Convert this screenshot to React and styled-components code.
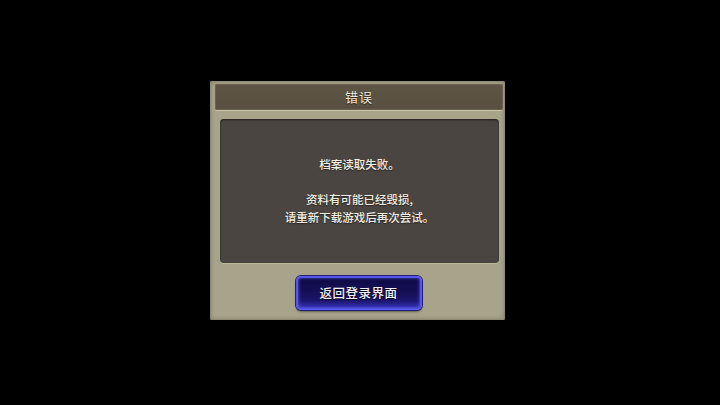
import React from "react";
import styled, { createGlobalStyle } from "styled-components";

const Global = createGlobalStyle`
  html, body { margin: 0; padding: 0; background: #000; }
  #root { width: 720px; height: 405px; }
`;

const Screen = styled.div`
  width: 720px;
  height: 405px;
  background: #000;
  display: flex;
  align-items: center;
  justify-content: center;
  font-family: "Noto Sans CJK SC", "Noto Sans", sans-serif;
`;

const Dialog = styled.div`
  width: 295px;
  height: 239px;
  box-sizing: border-box;
  margin-left: -5px;
  margin-top: -5px;
  padding: 3px 2px 10px 5px;
  background: #a8a38b;
  border-radius: 2px;
  box-shadow: inset 0 0 0 1px #8f8a72, inset 0 0 4px rgba(60, 55, 40, 0.5);
  display: flex;
  flex-direction: column;
`;

const TitleBar = styled.div`
  height: 26px;
  flex: none;
  background: linear-gradient(#5f5545, #594f40);
  border-radius: 2px;
  box-shadow: inset 0 0 0 1px #6c624f, 0 1px 0 #c7c2a8;
  display: flex;
  align-items: center;
  justify-content: center;
  color: #efeadc;
  font-size: 13px;
  letter-spacing: 1px;
  text-shadow: 0 1px 1px rgba(0, 0, 0, 0.6);
`;

const MessageBox = styled.div`
  margin: 9px 4px 0 5px;
  height: 144px;
  flex: none;
  box-sizing: border-box;
  background: #4a4540;
  border-radius: 4px;
  box-shadow: inset 0 1px 2px rgba(0, 0, 0, 0.6), 0 1px 0 #bdb8a0;
  display: flex;
  flex-direction: column;
  align-items: center;
  justify-content: center;
  gap: 17px;
  color: #f2eee4;
  font-size: 11.5px;
  font-weight: 500;
  line-height: 18px;
  text-shadow: 0 1px 1px rgba(0, 0, 0, 0.5);
  text-align: center;
`;

const Paragraph = styled.p`
  margin: 0;
`;

const Footer = styled.div`
  flex: 1;
  display: flex;
  align-items: flex-end;
  justify-content: center;
  padding-right: 1px;
`;

const ActionButton = styled.button`
  width: 126px;
  height: 34px;
  box-sizing: border-box;
  border: 2px solid #5656ea;
  border-radius: 5px;
  background: linear-gradient(#0f0b46 0%, #16115a 55%, #241f8a 100%);
  box-shadow: 0 0 0 1px #23207a, inset 0 0 3px rgba(110, 110, 255, 0.7),
    inset 0 -3px 4px rgba(80, 80, 240, 0.5), 0 2px 2px rgba(0, 0, 0, 0.4);
  color: #f3f0ff;
  font-family: inherit;
  font-size: 12.5px;
  font-weight: 500;
  letter-spacing: 0.5px;
  text-shadow: 0 1px 1px #000;
  padding: 0;
  cursor: pointer;
`;

export default function App() {
  return (
    <>
      <Global />
      <Screen>
        <Dialog>
          <TitleBar>错误</TitleBar>
          <MessageBox>
            <Paragraph>档案读取失败。</Paragraph>
            <Paragraph>
              资料有可能已经毁损,
              <br />
              请重新下载游戏后再次尝试。
            </Paragraph>
          </MessageBox>
          <Footer>
            <ActionButton>返回登录界面</ActionButton>
          </Footer>
        </Dialog>
      </Screen>
    </>
  );
}
